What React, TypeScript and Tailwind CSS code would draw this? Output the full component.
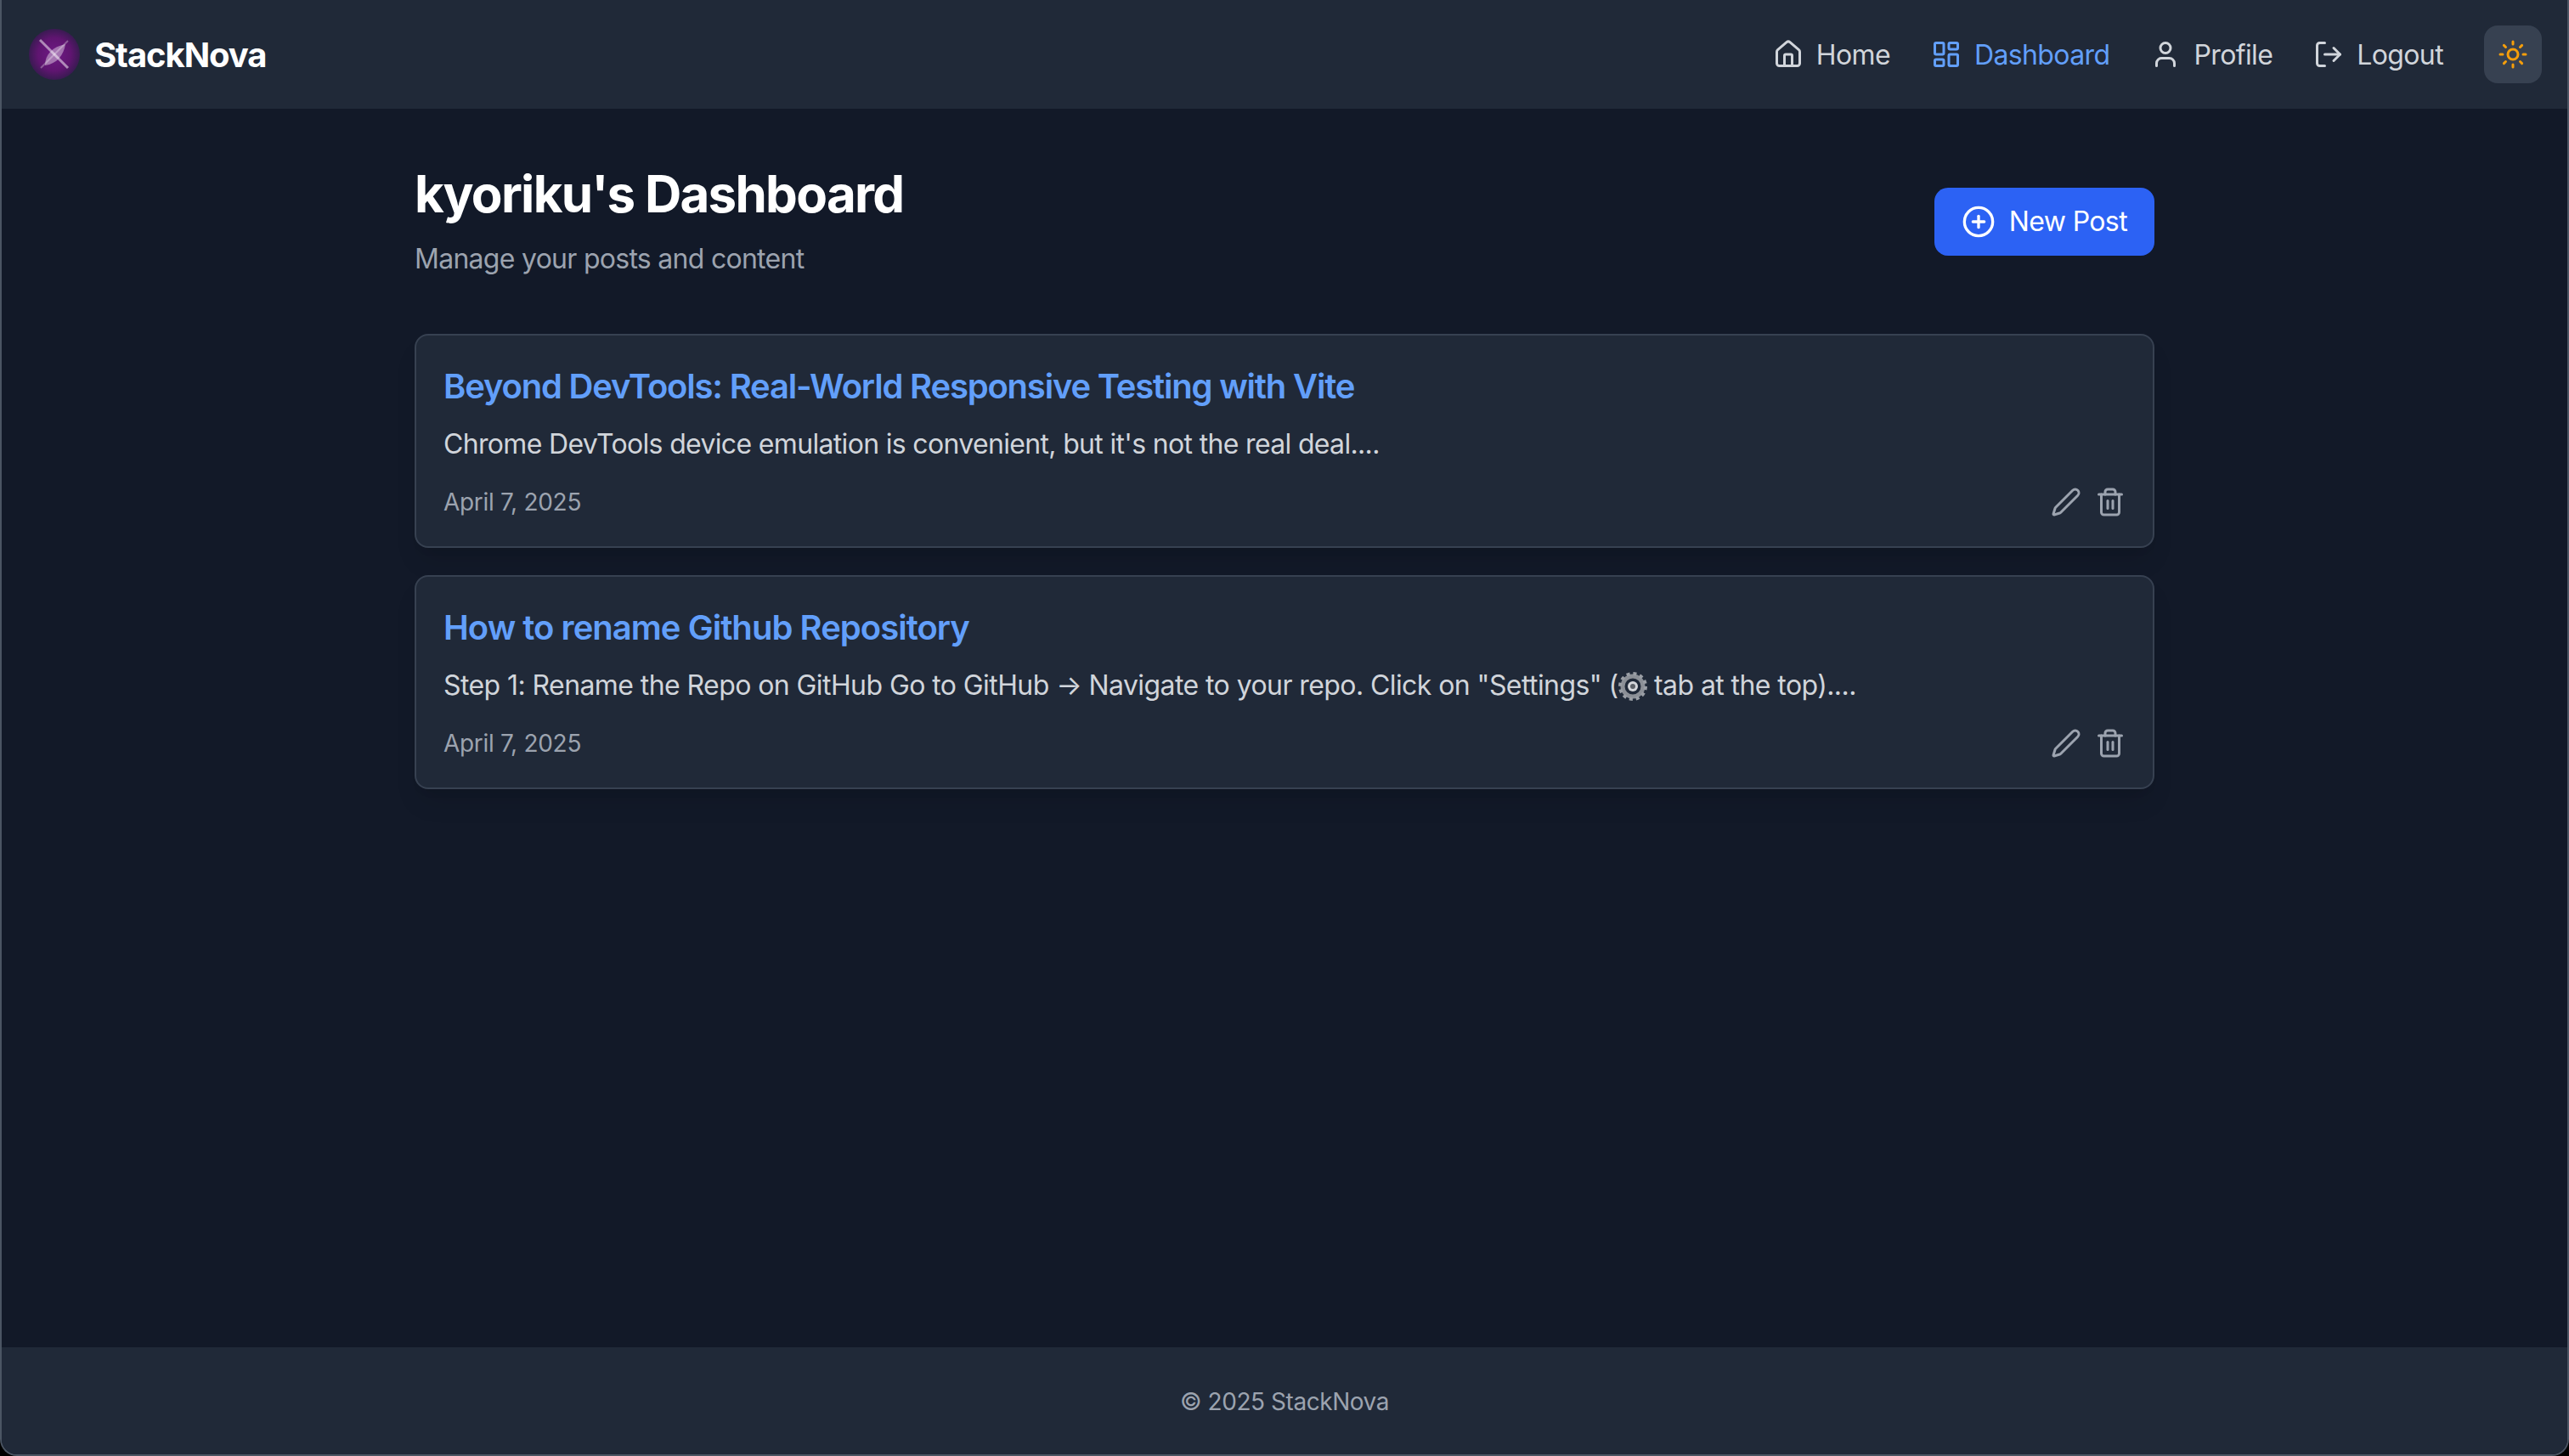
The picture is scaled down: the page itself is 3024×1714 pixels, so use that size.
import { House, LayoutDashboard, User, LogOut, Sun, CirclePlus, Pen, Trash2 } from 'lucide-react';

const navItems = [
  { label: 'Home', icon: House, active: false },
  { label: 'Dashboard', icon: LayoutDashboard, active: true },
  { label: 'Profile', icon: User, active: false },
  { label: 'Logout', icon: LogOut, active: false },
];

function Logo() {
  return (
    <svg width="60" height="60" viewBox="0 0 60 60" className="shrink-0">
      <defs>
        <radialGradient id="nova" cx="50%" cy="50%" r="50%">
          <stop offset="0%" stopColor="#6f1a85" />
          <stop offset="65%" stopColor="#5f1570" />
          <stop offset="100%" stopColor="#3a1a52" />
        </radialGradient>
      </defs>
      <circle cx="30" cy="30" r="30" fill="url(#nova)" />
      <path d="M19 43 C19 30 28 21 43 18 C41 31 33 41 19 43 Z" fill="#ffffff" fillOpacity="0.4" />
      <path d="M13 13 L46 46" stroke="#ffffff" strokeOpacity="0.5" strokeWidth="3" />
      <path d="M46 14 L14 46" stroke="#ffffff" strokeOpacity="0.3" strokeWidth="2" />
    </svg>
  );
}

function Gear() {
  return (
    <svg width="34" height="34" viewBox="0 0 34 34" className="inline-block align-[-7px]">
      <circle cx="17" cy="17" r="12" fill="none" stroke="#8b8f96" strokeWidth="5" />
      <circle cx="17" cy="17" r="15" fill="none" stroke="#9a9ea5" strokeWidth="4" strokeDasharray="4 3.85" />
      <circle cx="17" cy="17" r="6" fill="#d4d6da" />
      <circle cx="17" cy="17" r="3" fill="#5d6168" />
    </svg>
  );
}

interface PostCardProps {
  title: string;
  excerpt: React.ReactNode;
  titleClass: string;
  excerptClass: string;
}

function PostCard({ title, excerpt, titleClass, excerptClass }: PostCardProps) {
  return (
    <div className="bg-[#202938] border-2 border-[#374151] rounded-2xl p-8 shadow-[0_20px_30px_-6px_rgba(0,0,0,0.1),0_8px_12px_-8px_rgba(0,0,0,0.1)]">
      <h2 className={`text-[40px] leading-[56px] font-semibold text-[#629ffa] mb-4 ${titleClass}`}>{title}</h2>
      <p className={`text-[32px] leading-[48px] text-[#d1d5db] mb-6 ${excerptClass}`}>{excerpt}</p>
      <div className="flex items-center justify-between">
        <span className="text-[28px] leading-[40px] tracking-[-0.3px] text-[#9ca3af]">April 7, 2025</span>
        <div className="flex items-center gap-4 text-[#9ca3af]">
          <Pen size={36} strokeWidth={2} />
          <Trash2 size={36} strokeWidth={2} />
        </div>
      </div>
    </div>
  );
}

export default function App() {
  return (
    <div className="h-[1714px] bg-black font-['Inter',sans-serif]">
      <div className="h-full flex flex-col bg-[#121928] border-2 border-t-0 border-[#4b5563] rounded-b-[20px] overflow-hidden">
        <header className="h-[128px] shrink-0 bg-[#202938] flex items-center justify-between pl-[32px] pr-[30px]">
          <div className="flex items-center gap-[17px]">
            <Logo />
            <span className="pt-[1px] text-[40px] font-bold tracking-[-1.07px] text-white">StackNova</span>
          </div>
          <nav className="flex items-center gap-[48px]">
            {navItems.map(({ label, icon: Icon, active }) => (
              <a
                key={label}
                className={active ? 'flex items-center gap-[15px] text-[32px] tracking-[-0.62px] text-[#629ffa]' : 'flex items-center gap-[15px] text-[32px] tracking-[-0.62px] text-[#d1d5db]'}
              >
                <Icon size={36} strokeWidth={2} />
                <span className="pt-[1px]">{label}</span>
              </a>
            ))}
            <button className="w-[68px] h-[68px] rounded-2xl bg-[#374151] flex items-center justify-center text-[#f59e0b]">
              <Sun size={36} strokeWidth={2} />
            </button>
          </nav>
        </header>

        <main className="flex-1 w-[2048px] mx-auto pt-[64px]">
          <div className="flex items-center justify-between mb-[64px]">
            <div>
              <h1 className="text-[60px] leading-[72px] font-bold tracking-[-1.72px] text-white mb-[17px]">kyoriku's Dashboard</h1>
              <p className="text-[32px] leading-[48px] tracking-[-0.72px] text-[#9ca3af]">Manage your posts and content</p>
            </div>
            <button className="h-[80px] px-[32px] bg-[#2c62f4] rounded-2xl flex items-center gap-[16px] text-[32px] tracking-[-0.62px] text-white">
              <CirclePlus size={40} strokeWidth={2} />
              <span className="pt-[1px]">New Post</span>
            </button>
          </div>
          <div className="flex flex-col gap-8">
            <PostCard
              title="Beyond DevTools: Real-World Responsive Testing with Vite"
              titleClass="tracking-[-1.2px]"
              excerptClass="tracking-[-0.67px]"
              excerpt="Chrome DevTools device emulation is convenient, but it's not the real deal...."
            />
            <PostCard
              title="How to rename Github Repository"
              titleClass="tracking-[-0.97px]"
              excerptClass="tracking-[-0.58px]"
              excerpt={
                <>
                  Step 1: Rename the Repo on GitHub Go to GitHub → Navigate to your repo. Click on "Settings" (<Gear /> tab at the top)....
                </>
              }
            />
          </div>
        </main>

        <footer className="h-[126px] shrink-0 pt-[2px] bg-[#202938] flex items-center justify-center text-[28px] tracking-[-0.45px] text-[#9ca3af]">
          © 2025 StackNova
        </footer>
      </div>
    </div>
  );
}
